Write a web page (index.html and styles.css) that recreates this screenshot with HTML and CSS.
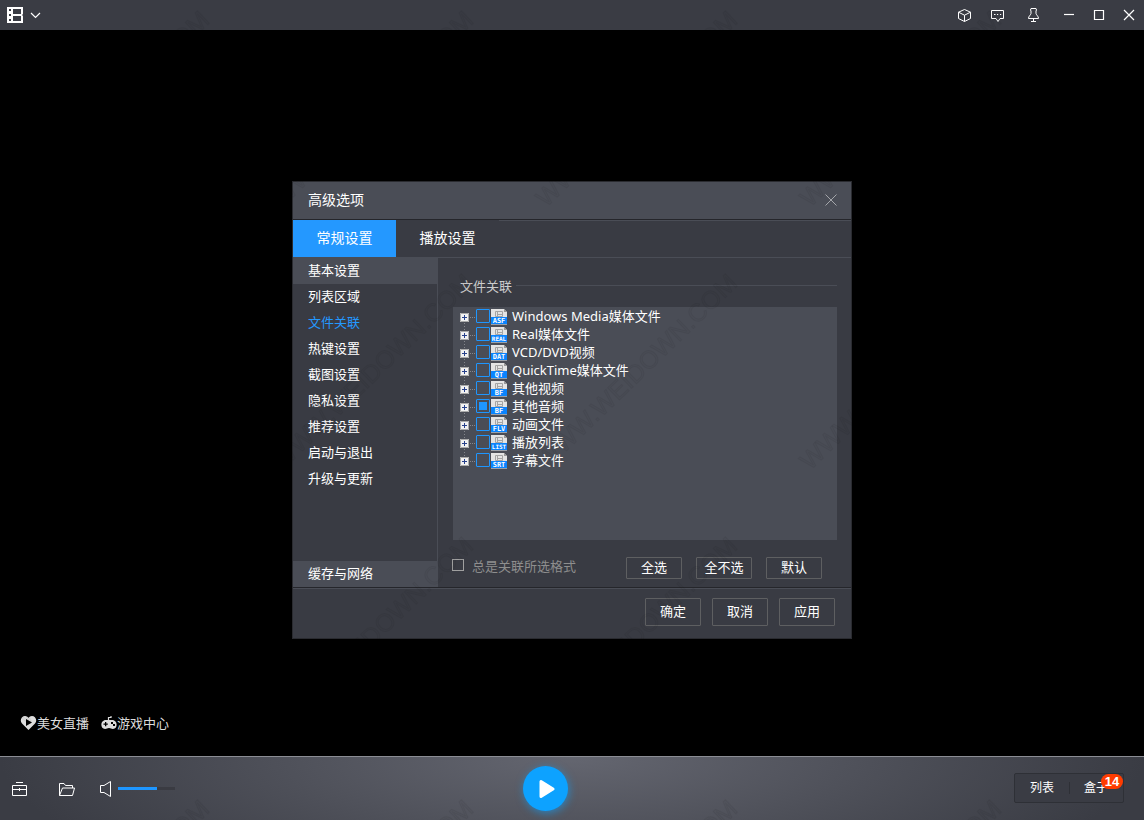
FILE: index.html
```html
<!DOCTYPE html>
<html lang="zh-CN">
<head>
<meta charset="utf-8">
<title>高级选项</title>
<link rel="stylesheet" href="styles.css">
</head>
<body>
<div class="player">
  <header class="topbar">
    <button class="menu" aria-label="主菜单">
      <svg width="36" height="18" viewBox="0 0 36 18"><path fill="#fff" fill-rule="evenodd" d="M1 1h16v7l-1 1 1 1v7H1zM3 3v2h2V3zM3 8v2h2V8zM3 13v2h2v-2zM7 3v5h8V3zM7 10v5h8v-5z"/><path d="M25 7l4.500 4.500L34 7" fill="none" stroke="#fff" stroke-width="1.200"/></svg>
    </button>
    <div class="tools">
      <button class="tool" aria-label="皮肤"><svg width="15" height="15" viewBox="0 0 15 15"><path d="M7.500 1.500l6 2.700v6.300l-6 3-6-3V4.200zM1.500 4.200l6 3 6-3M7.500 7.200v6.300"/></svg></button>
      <button class="tool" aria-label="反馈"><svg width="15" height="15" viewBox="0 0 15 15"><path d="M1.500 2.500h12v8H10l-2 3-2-3H1.500z"/><path d="M4 6.500h1.500M7 6.500h1.200M10 6.500h1.200"/></svg></button>
      <button class="tool pin" aria-label="置顶"><svg width="15" height="16" viewBox="0 0 15 16"><path d="M5 1.500h5l.5 1.500-.5 1v2.500c.5 2 2.500 2.500 2.500 5h-10c0-2.500 2-3 2.500-5V4l-.5-1zM7.500 11.500V14.500M5 14.500h5"/></svg></button>
      <button class="win" aria-label="最小化"><svg width="12" height="12" viewBox="0 0 12 12"><path d="M1 5.500h10"/></svg></button>
      <button class="win" aria-label="最大化"><svg width="12" height="12" viewBox="0 0 12 12"><path d="M1.500 1.500h9v9h-9z"/></svg></button>
      <button class="win" aria-label="关闭"><svg width="12" height="12" viewBox="0 0 12 12"><path d="M1 1l10 10M11 1L1 11"/></svg></button>
    </div>
  </header>

  <main class="stage">
    <nav class="promo">
      <a href="#live"><svg width="17" height="16" viewBox="0 0 17 16"><path fill="#ddd" fill-rule="evenodd" d="M8.500 15L2 8.500C-1 5 2 1 5 1c2 0 3 1 3.500 2C9 2 10 1 12 1c3 0 6 4 3 7.500zM6 4v7l6-3.500z"/></svg>美女直播</a>
      <a href="#games"><svg width="16" height="16" viewBox="0 0 16 16"><path d="M7.500 6V2.500H10V1" fill="none" stroke="#ddd" stroke-width="1.200"/><path fill="#ddd" fill-rule="evenodd" d="M5 5h6c6 0 6 9 1 9-2 0-2-1-4-1s-2 1-4 1C-1 14-1 5 5 5zM4 7v1.500H2.500v1.300H4v1.500h1.300V9.800h1.500V8.500H5.300V7zM10 7v2h2V7zM12 9v2h2V9z"/></svg>游戏中心</a>
    </nav>
  </main>

  <footer class="controls">
    <div class="left">
      <button class="tool case" aria-label="工具箱"><svg width="17" height="16" viewBox="0 0 17 16"><path d="M5 1.500h7M1.500 4.500h14v10h-14zM1.500 8.500h14M8.500 7v3"/></svg></button>
      <button class="tool folder" aria-label="打开文件"><svg width="18" height="16" viewBox="0 0 18 16"><path d="M1.500 14.500v-12H6l1.500 2h7V7M1.500 14.500L4.500 7h12L14.500 14.500z"/></svg></button>
      <button class="tool sound" aria-label="静音"><svg width="13" height="18" viewBox="0 0 13 18"><path d="M1.500 5.500H5l6.500-4v15L5 12.500H1.500z"/></svg></button>
      <input class="volume" type="range" aria-label="音量" min="0" max="100" value="68">
    </div>
    <button class="play" aria-label="播放"><svg width="16" height="20" viewBox="0 0 16 20"><path d="M2 2.500v15L14 10z" fill="#fff" stroke="#fff" stroke-width="3" stroke-linejoin="round"/></svg></button>
    <div class="right">
      <div class="panels">
        <button>列表</button>
        <button>盒子</button>
        <span class="badge">14</span>
      </div>
    </div>
  </footer>
</div>

<div class="overlay">
  <section class="dialog" role="dialog" aria-labelledby="dlg-title">
    <div class="titlebar">
      <h1 id="dlg-title">高级选项</h1>
      <button class="close" aria-label="关闭"><svg width="12" height="12" viewBox="0 0 12 12"><path d="M.5.5l11 11M11.500.5l-11 11"/></svg></button>
    </div>
    <div class="tabs">
      <button class="tab active">常规设置</button>
      <button class="tab">播放设置</button>
      <span class="tabfill"></span>
    </div>
    <div class="body">
      <nav class="side">
        <a class="group" href="#basic">基本设置</a>
        <a href="#list">列表区域</a>
        <a class="current" href="#assoc">文件关联</a>
        <a href="#hotkey">热键设置</a>
        <a href="#shot">截图设置</a>
        <a href="#privacy">隐私设置</a>
        <a href="#recommend">推荐设置</a>
        <a href="#startup">启动与退出</a>
        <a href="#update">升级与更新</a>
        <a class="group last" href="#cache">缓存与网络</a>
      </nav>
      <div class="content">
        <h2><span>文件关联</span></h2>
        <div class="listbox">
          <svg class="defs" width="0" height="0"><defs>
            <g id="file"><path d="M0 0h13l3 3v13H0z" fill="#e4e4e4"/><path d="M13 0v3h3z" fill="#999"/><path d="M4.500 2.500h7v5h-7zM6.500 2.500v5M6.500 5.500h5" fill="none" stroke="#a4a4a4"/><path d="M0 8h16v7H0z" fill="#0a84ff"/><path d="M0 15h16v1H0z" fill="#9aa0a8"/></g>
            <g id="plus"><path d="M0 0h9v9H0z" fill="#f2f2f2"/><path d="M.5.5h8v8h-8z" fill="none" stroke="#aaa"/><path d="M2 4.500h5M4.500 2v5" stroke="#26408b"/></g>
          </defs></svg>
          <ul class="tree">
            <li><button class="expand" aria-label="展开"><svg width="9" height="9"><use href="#plus"/></svg></button><i></i><label><input type="checkbox"><svg width="16" height="16"><use href="#file"/><text class="t3" x="8" y="14">ASF</text></svg><span>Windows Media媒体文件</span></label></li>
            <li><button class="expand" aria-label="展开"><svg width="9" height="9"><use href="#plus"/></svg></button><i></i><label><input type="checkbox"><svg width="16" height="16"><use href="#file"/><text class="t4" x="8" y="14">REAL</text></svg><span>Real媒体文件</span></label></li>
            <li><button class="expand" aria-label="展开"><svg width="9" height="9"><use href="#plus"/></svg></button><i></i><label><input type="checkbox"><svg width="16" height="16"><use href="#file"/><text class="t3" x="8" y="14">DAT</text></svg><span>VCD/DVD视频</span></label></li>
            <li><button class="expand" aria-label="展开"><svg width="9" height="9"><use href="#plus"/></svg></button><i></i><label><input type="checkbox"><svg width="16" height="16"><use href="#file"/><text class="t3" x="8" y="14">QT</text></svg><span>QuickTime媒体文件</span></label></li>
            <li><button class="expand" aria-label="展开"><svg width="9" height="9"><use href="#plus"/></svg></button><i></i><label><input type="checkbox"><svg width="16" height="16"><use href="#file"/><text class="t3" x="8" y="14">BF</text></svg><span>其他视频</span></label></li>
            <li><button class="expand" aria-label="展开"><svg width="9" height="9"><use href="#plus"/></svg></button><i></i><label><input type="checkbox" checked><svg width="16" height="16"><use href="#file"/><text class="t3" x="8" y="14">BF</text></svg><span>其他音频</span></label></li>
            <li><button class="expand" aria-label="展开"><svg width="9" height="9"><use href="#plus"/></svg></button><i></i><label><input type="checkbox"><svg width="16" height="16"><use href="#file"/><text class="t3" x="8" y="14">FLV</text></svg><span>动画文件</span></label></li>
            <li><button class="expand" aria-label="展开"><svg width="9" height="9"><use href="#plus"/></svg></button><i></i><label><input type="checkbox"><svg width="16" height="16"><use href="#file"/><text class="t4" x="8" y="14">LIST</text></svg><span>播放列表</span></label></li>
            <li><button class="expand" aria-label="展开"><svg width="9" height="9"><use href="#plus"/></svg></button><i></i><label><input type="checkbox"><svg width="16" height="16"><use href="#file"/><text class="t3" x="8" y="14">SRT</text></svg><span>字幕文件</span></label></li>
          </ul>
        </div>
        <div class="options">
          <label class="always"><input type="checkbox"><span>总是关联所选格式</span></label>
          <button class="btn">全选</button>
          <button class="btn">全不选</button>
          <button class="btn">默认</button>
        </div>
      </div>
    </div>
    <div class="actions">
      <button class="btn">确定</button>
      <button class="btn">取消</button>
      <button class="btn">应用</button>
    </div>
  </section>
</div>

<svg class="watermark" width="100%" height="100%" aria-hidden="true">
  <defs><pattern id="wm" width="264" height="263" patternUnits="userSpaceOnUse">
    <text transform="translate(18 208) rotate(-44)">WWW.WEIDOWN.COM</text>
    <text transform="translate(282 208) rotate(-44)">WWW.WEIDOWN.COM</text>
    <text transform="translate(18 471) rotate(-44)">WWW.WEIDOWN.COM</text>
    <text transform="translate(-246 208) rotate(-44)">WWW.WEIDOWN.COM</text>
  </pattern></defs>
  <rect width="100%" height="100%" fill="url(#wm)"/>
</svg>
</body>
</html>
```

FILE: styles.css
```css
* { box-sizing: border-box; }

body {
  margin: 0;
  background: #000;
  color: #fff;
  font: 13px/18px "Noto Sans", "Noto Sans CJK SC", sans-serif;
}

button {
  margin: 0;
  padding: 0;
  border: 0;
  background: none;
  color: inherit;
  font: inherit;
}

a { color: inherit; text-decoration: none; }
svg { display: block; }

.player { display: flex; flex-direction: column; min-height: 100vh; }

.topbar {
  display: flex;
  justify-content: space-between;
  height: 30px;
  background: #3a3c44;
}
.menu { padding: 0 6px; }
.tools { display: flex; }
.tool, .win {
  display: flex;
  align-items: center;
  justify-content: center;
  width: 33px;
}
.pin { width: 40px; padding-right: 1px; }
.win { width: 30px; }
.tool path, .win path { fill: none; stroke: #fff; stroke-width: 1; }
.win path { stroke-width: 1.2; }

.stage { flex: 1; display: flex; align-items: flex-end; }
.promo { display: flex; gap: 12px; padding: 0 20px 24px; color: #ddd; }
.promo a { display: flex; align-items: center; }

.controls {
  display: grid;
  grid-template-columns: 1fr auto 1fr;
  align-items: center;
  height: 64px;
  border-top: 1px solid #8b8d94;
  background: radial-gradient(ellipse 50% 240% at 50% 0, #646670, #3a3c44);
}
.left { display: flex; align-items: center; }
.left .tool { height: 30px; }
.left .case { width: 38px; }
.left .folder { width: 58px; }
.left .sound { width: 20px; padding-right: 2px; }

.volume {
  appearance: none;
  width: 57px;
  height: 3px;
  margin: 0 0 0 2px;
  background: linear-gradient(90deg, #1e96ff 68%, #3a3b42 68%);
}
.volume::-webkit-slider-thumb { appearance: none; width: 1px; height: 3px; }

.play {
  display: flex;
  align-items: center;
  justify-content: center;
  width: 45px;
  height: 45px;
  margin-right: 53px;
  padding-left: 3px;
  border-radius: 50%;
  background: #0da2ff;
  box-shadow: 1px 2px 8px rgba(13, 162, 255, .6);
}

.right { display: flex; justify-content: flex-end; padding: 0 20px 2px 0; }
.panels {
  position: relative;
  display: flex;
  width: 110px;
  height: 30px;
  border: 1px solid #2e3036;
  border-radius: 2px;
  background: #3a3c44;
}
.panels button { flex: 1; font-size: 12px; }
.panels button + button { background: linear-gradient(#2e3036, #2e3036) 0 50% / 1px 12px no-repeat; }
.badge {
  position: absolute;
  top: 0;
  right: 0;
  width: 22px;
  border-radius: 8px;
  background: #ff3c00;
  font: bold 13px/15px "Liberation Sans", sans-serif;
  text-align: center;
}

.overlay {
  position: fixed;
  inset: 0;
  display: grid;
  place-items: center;
}
.dialog {
  width: 560px;
  border: 1px solid #2a2b30;
  background: #393b43;
}
.titlebar {
  display: flex;
  align-items: center;
  justify-content: space-between;
  height: 38px;
  padding: 0 14px 2px 15px;
  border-bottom: 1px solid #25262b;
  background: #4a4d56;
}
.titlebar h1 { margin: 0; font-size: 14px; font-weight: 400; line-height: 20px; }
.close path { stroke: #a4a6aa; }

.tabs { display: flex; height: 38px; border-bottom: 1px solid #4a4d56; }
.tab { width: 103px; padding-bottom: 2px; font-size: 14px; }
.tab.active { background: #2498ff; }
.tabfill { flex: 1; border-top: 1px solid #4a4d56; }

.body { display: flex; min-height: 329px; }
.side {
  display: flex;
  flex-direction: column;
  width: 145px;
  border-right: 1px solid #4a4d56;
}
.side a { padding: 3px 15px 5px; }
.side .group { background: #4a4d56; }
.side .current { color: #2498ff; }
.side .last { margin-top: auto; }

.content { flex: 1; padding: 19px 14px 8px 15px; }
.content h2 {
  display: flex;
  align-items: center;
  gap: 4px;
  margin: 0 0 12px;
  padding-left: 7px;
  color: #ccc;
  font-size: 13px;
  font-weight: 400;
}
.content h2::after { content: ""; flex: 1; height: 1px; margin-bottom: 2px; background: #4a4d56; }

.listbox { min-height: 233px; padding: 1px 7px; background: #4a4d56; }
.defs { position: absolute; }
.tree {
  margin: 0;
  padding: 0;
  list-style: none;
  background: repeating-linear-gradient(#85878d 0 1px, transparent 1px 3px) 4px 9px / 1px 144px no-repeat;
}
.tree li, .tree label { display: flex; align-items: center; height: 18px; }
.tree i {
  width: 6px;
  height: 1px;
  margin-right: 1px;
  background: repeating-linear-gradient(90deg, transparent 0 1px, #85878d 1px 2px);
}
.tree input {
  appearance: none;
  width: 14px;
  height: 14px;
  margin: 0 1px 2px 0;
  border: 1px solid #1e96ff;
  border-radius: 1px;
}
.tree input:checked { padding: 2px; background: #1e96ff content-box; }
.tree span { padding: 0 0 2px 5px; }
.tree text { fill: #fff; font-family: "DejaVu Sans Mono", monospace; font-weight: 700; text-anchor: middle; }
.t3 { font-size: 7px; }
.t4 { font-size: 6px; }

.options { display: flex; gap: 14px; margin-top: 17px; padding-right: 15px; }
.always {
  display: flex;
  flex: 1;
  align-items: center;
  gap: 8px;
  height: 18px;
  margin-left: -1px;
  color: #8e8e8e;
}
.always input {
  appearance: none;
  width: 12px;
  height: 12px;
  margin: 0 0 2px;
  border: 1px solid #a0a0a0;
}
.btn { width: 56px; height: 22px; border: 1px solid #5e5f61; border-radius: 1px; }
.options .btn, .actions .btn { padding-bottom: 2px; }

.actions {
  display: flex;
  justify-content: flex-end;
  gap: 11px;
  padding: 10px 16px 12px;
  border-top: 1px solid #25262b;
  box-shadow: inset 0 1px #4a4d56;
}
.actions .btn { height: 28px; }

.watermark { position: fixed; inset: 0; pointer-events: none; }
.watermark text {
  fill: rgba(0, 0, 0, .02);
  stroke: rgba(0, 0, 0, .05);
  font: 25px "Liberation Sans", sans-serif;
}
```
